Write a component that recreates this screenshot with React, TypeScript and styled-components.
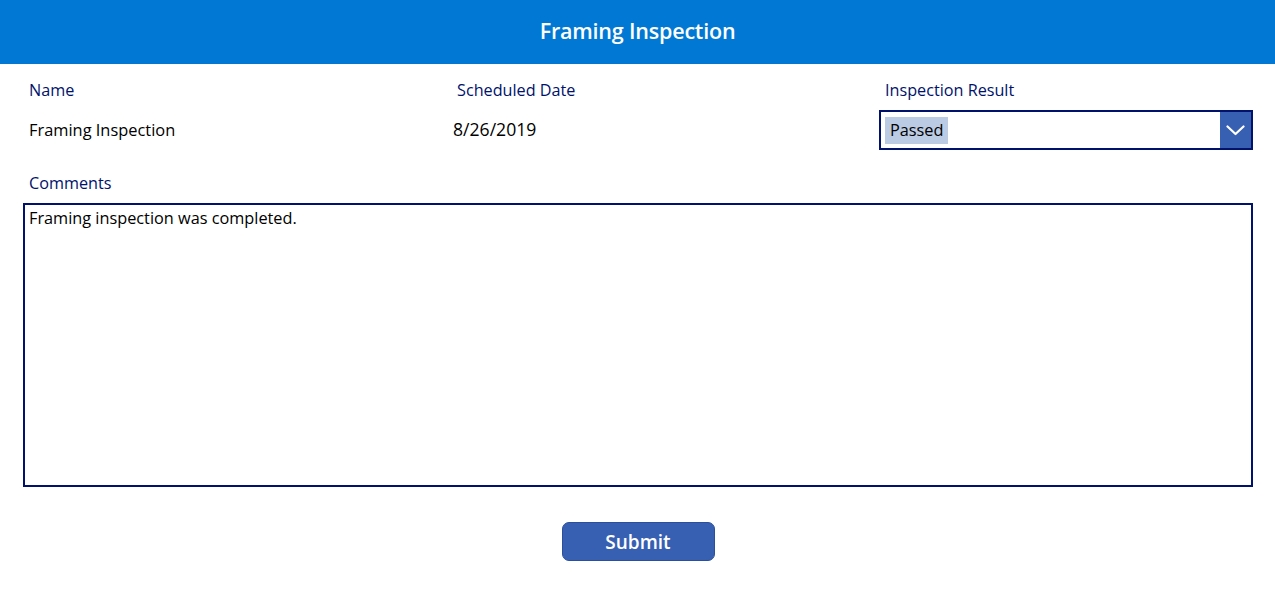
import React from "react";
import styled, { createGlobalStyle } from "styled-components";

const NAVY = "#00126B";

const Global = createGlobalStyle`
  html, body { margin: 0; padding: 0; background: #ffffff; }
  body { font-family: "Open Sans", "Noto Sans", sans-serif; }
  * { box-sizing: border-box; }
`;

const Page = styled.div`
  width: 1275px;
  height: 612px;
  background: #ffffff;
  display: flex;
  flex-direction: column;
`;

const Header = styled.header`
  height: 64px;
  background: #0078d4;
  color: #ffffff;
  display: flex;
  align-items: center;
  justify-content: center;
  font-size: 21.5px;
  font-weight: 600;
  letter-spacing: -0.2px;
  padding-bottom: 3px;
`;

const Form = styled.main`
  padding: 0 22px 0 23px;
  display: flex;
  flex-direction: column;
`;

const FieldRow = styled.div`
  display: grid;
  grid-template-columns: 428px 428px 1fr;
  margin-top: 16px;
`;

const Field = styled.div`
  display: flex;
  flex-direction: column;
`;

const Label = styled.div<{ $gap?: number }>`
  font-size: 16.2px;
  line-height: 20px;
  color: ${NAVY};
  padding-left: 6px;
  margin-bottom: ${(p) => p.$gap ?? 10}px;
`;

const Value = styled.div<{ $inset: number; $size: number }>`
  height: 40px;
  display: flex;
  align-items: center;
  padding-left: ${(p) => p.$inset}px;
  padding-bottom: 2px;
  font-size: ${(p) => p.$size}px;
  color: #000000;
`;

const Dropdown = styled.div`
  height: 40px;
  border: 2px solid ${NAVY};
  display: flex;
  align-items: center;
  padding-left: 4px;
  background: #ffffff;
`;

const Selected = styled.span`
  background: #bccbe4;
  color: #000000;
  font-size: 16.3px;
  line-height: 27px;
  padding: 0 5px;
`;

const Spacer = styled.div`
  flex: 1;
`;

const Chevron = styled.div`
  width: 31px;
  align-self: stretch;
  background: #3860b2;
  display: flex;
  align-items: center;
  justify-content: center;
`;

const CommentsBlock = styled.div`
  margin-top: 23px;
  display: flex;
  flex-direction: column;
`;

const TextArea = styled.div`
  height: 284px;
  border: 2px solid ${NAVY};
  padding: 3px 4px;
  font-size: 16.3px;
  line-height: 20px;
  color: #000000;
`;

const Actions = styled.div`
  display: flex;
  justify-content: center;
  margin-top: 35px;
`;

const Button = styled.button`
  width: 153px;
  height: 39px;
  border-radius: 7px;
  background: #3860b2;
  border: 1px solid #2c4f9c;
  color: #ffffff;
  font-family: "Open Sans", "Noto Sans", sans-serif;
  font-size: 19px;
  font-weight: 600;
  padding: 1px 0 0;
  cursor: pointer;
`;

export default function App() {
  return (
    <Page>
      <Global />
      <Header>Framing Inspection</Header>
      <Form>
        <FieldRow>
          <Field>
            <Label>Name</Label>
            <Value $inset={6} $size={16.4}>Framing Inspection</Value>
          </Field>
          <Field>
            <Label>Scheduled Date</Label>
            <Value $inset={2} $size={17.6}>8/26/2019</Value>
          </Field>
          <Field>
            <Label>Inspection Result</Label>
            <Dropdown>
              <Selected>Passed</Selected>
              <Spacer />
              <Chevron>
                <svg width="19" height="11" viewBox="0 0 19 11" fill="none">
                  <path d="M1.5 1.5 L9.5 9 L17.5 1.5" stroke="#ffffff" strokeWidth="2.2" strokeLinecap="round" strokeLinejoin="round" />
                </svg>
              </Chevron>
            </Dropdown>
          </Field>
        </FieldRow>
        <CommentsBlock>
          <Label $gap={10}>Comments</Label>
          <TextArea>Framing inspection was completed.</TextArea>
        </CommentsBlock>
        <Actions>
          <Button>Submit</Button>
        </Actions>
      </Form>
    </Page>
  );
}
